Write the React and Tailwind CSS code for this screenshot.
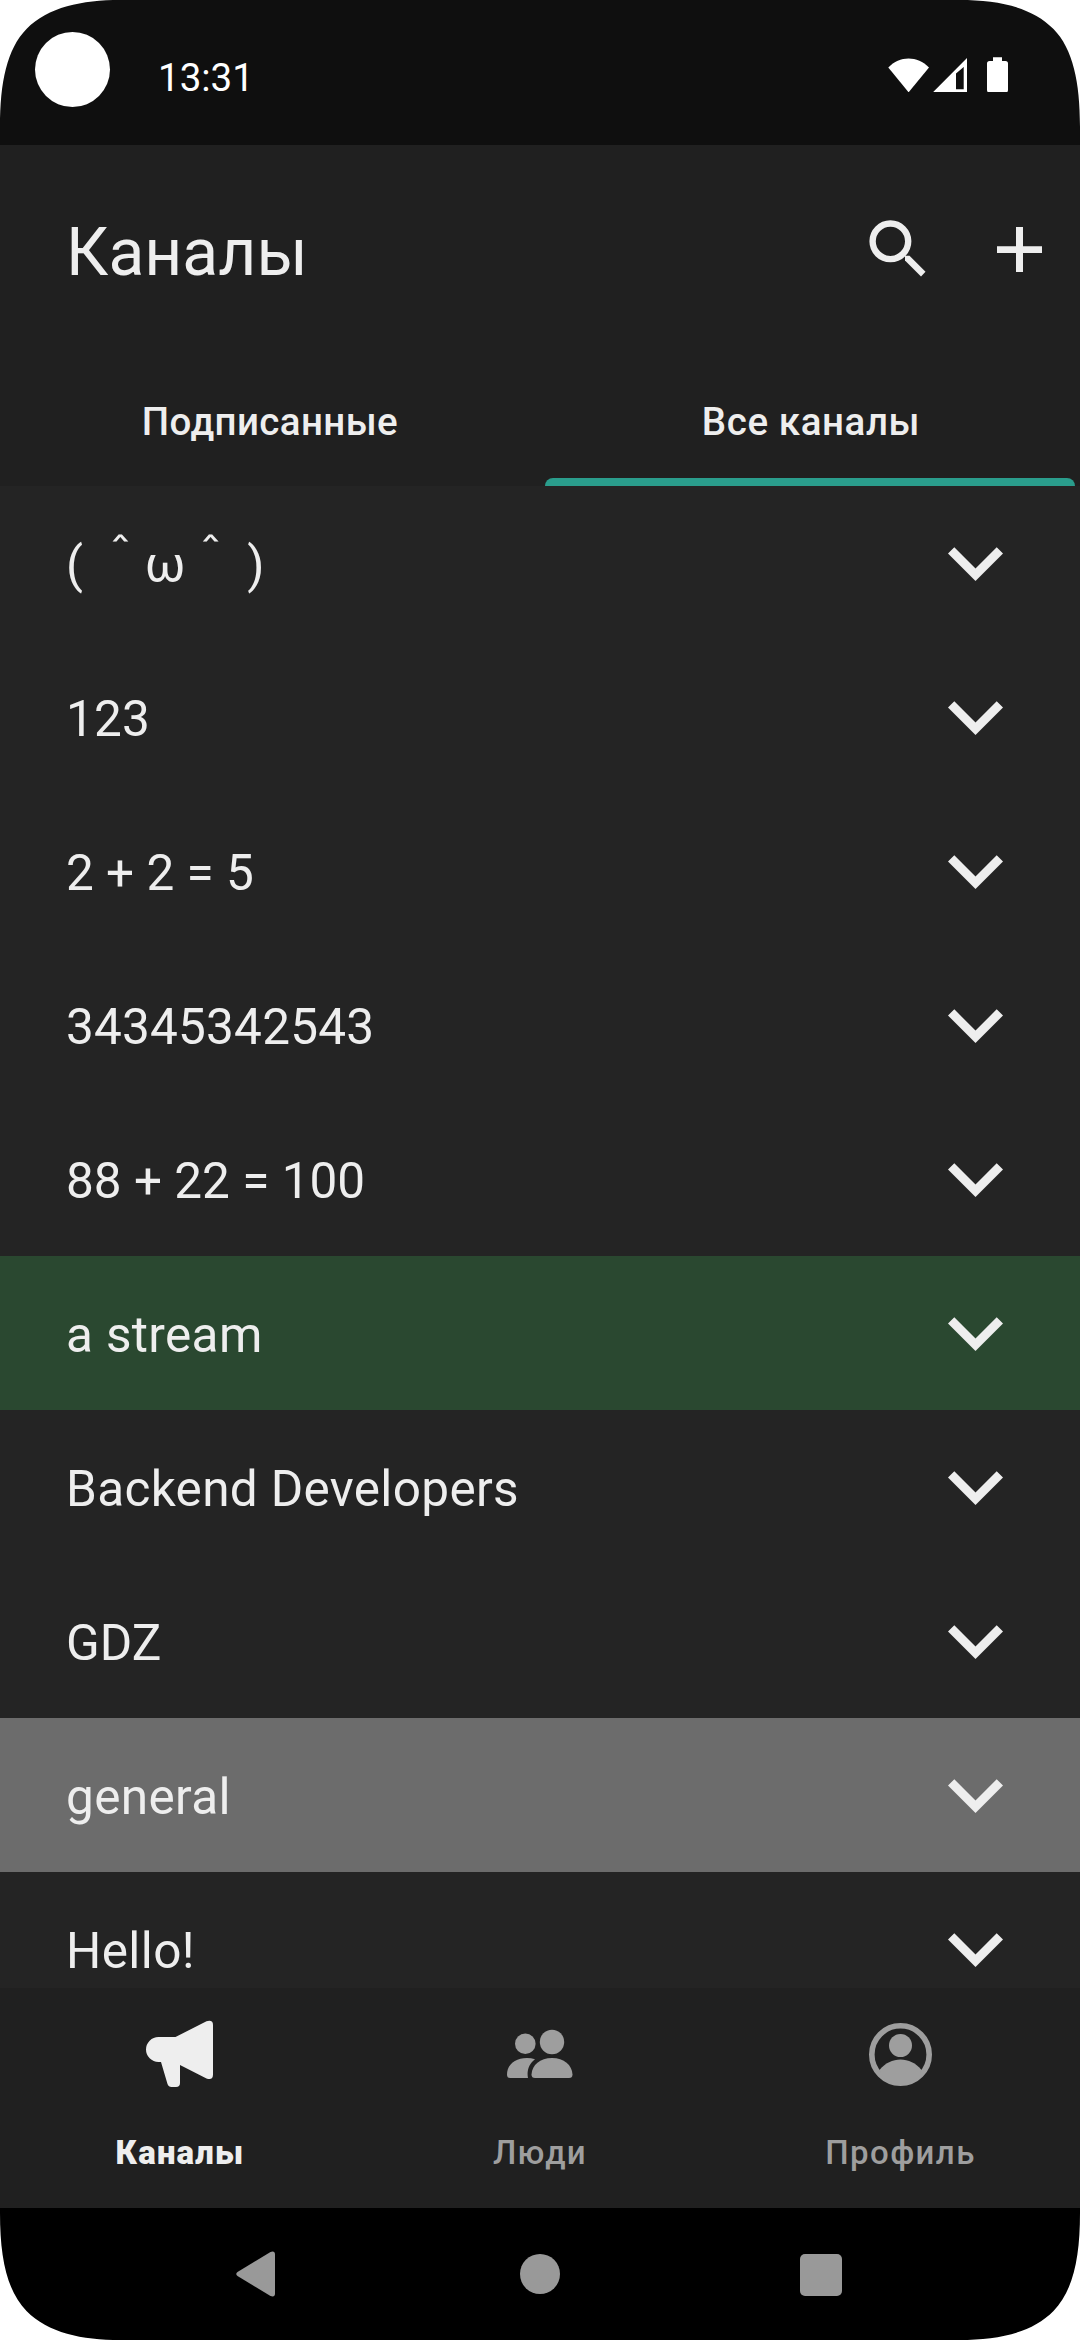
const FONT = 'font-[Roboto,"Noto_Sans","Noto_Sans_CJK_JP",sans-serif]';

const channels = [
  { name: "( ＾ω＾ )" },
  { name: "123", spacing: "tracking-[0.2px]" },
  { name: "2 + 2 = 5" },
  { name: "34345342543", spacing: "tracking-[0.2px]" },
  { name: "88 + 22 = 100" },
  { name: "a stream", tone: "bg-[#2a4830]", spacing: "tracking-[0.35px]" },
  { name: "Backend Developers", spacing: "tracking-[0.33px]" },
  { name: "GDZ" },
  { name: "general", tone: "bg-[#6c6c6c]", spacing: "tracking-[0.35px]" },
  { name: "Hello!", spacing: "tracking-[0.4px]" },
];

function Corner({ className }) {
  return (
    <svg className={"absolute h-32 w-32 " + className} viewBox="0 0 128 128" fill="#fff">
      <path d="M0 0H120C82 0 48 7 26.500 29C7 49 0 82 0 127Z" />
    </svg>
  );
}

function StatusBar() {
  return (
    <header className="flex h-[145px] shrink-0 items-start bg-[#0f0f0f] text-white">
      <div className="mt-8 ml-[35px] size-[75px] rounded-full bg-white" />
      <span className="mt-[55px] ml-[48px] text-[38.5px] leading-[46px]">13:31</span>
      <svg className="mt-[56px] ml-auto mr-[71px] h-9 w-[122px]" viewBox="887 56 122 36" fill="#fff">
        <path d="M888.300 67.500C899.500 55.500 917.500 55.500 929 67.500L908.600 92.300Z" />
        <path fillRule="evenodd" d="M932.500 92.700L967 58V92.700ZM956 73.500V89.300H963.700V67Z" />
        <path d="M993 57.300H1002V61H1005.500Q1008 61 1008 63.500V90Q1008 92.500 1005.500 92.500H989.500Q987 92.500 987 90V63.500Q987 61 989.500 61H993Z" />
      </svg>
    </header>
  );
}

function TitleBar() {
  return (
    <div className="flex h-[215px] shrink-0 items-start">
      <h1 className="mt-[69px] ml-[66px] text-[66px] leading-[78px]">Каналы</h1>
      <svg className="mt-[74px] ml-auto h-[60px] w-[60px]" viewBox="868 219 60 60" fill="none" stroke="#eeeeee">
        <circle cx="890.400" cy="241.300" r="17.800" strokeWidth="6.400" />
        <path d="M905 255.700H909.500L925.500 271.800L921 276.500L905 260.500Z" fill="#eeeeee" stroke="none" />
      </svg>
      <svg className="mt-[82px] mr-[38px] ml-[69px] h-[46px] w-[45px]" viewBox="0 0 45 46" fill="#eeeeee">
        <path d="M19 0H26V19.300H45V26H26V45H19V26H0V19.300H19Z" />
      </svg>
    </div>
  );
}

function Tabs() {
  return (
    <div className="grid h-[126px] shrink-0 grid-cols-2 text-center text-[38.5px] leading-[46px] font-medium tracking-[0.4px]">
      <div className="pt-[39px]">Подписанные</div>
      <div className="flex flex-col justify-between px-[5px] pt-[39px]">
        <span className="pl-0.5 tracking-[0.6px]">Все каналы</span>
        <div className="h-2 rounded-t-lg bg-[#2a9d8c]" />
      </div>
    </div>
  );
}

function Channel({ name, tone = "", spacing = "" }) {
  return (
    <li className={"flex h-[154px] shrink-0 items-start justify-between pr-[77px] pl-[66px] " + tone}>
      <span className={"mt-[50px] text-[49.5px] leading-[58px] whitespace-pre " + spacing}>{name}</span>
      <svg className="mt-[61px] h-[35px] w-[55px]" viewBox="0 0 55 35" fill="#eeeeee">
        <path d="M6.300 0.300L27.500 21.600L48.700 0.300L55 6.500L27.500 34L0 6.500Z" />
      </svg>
    </li>
  );
}

function MegaphoneIcon() {
  return (
    <svg className="h-[68px] w-[68px]" viewBox="146 2020 68 68" fill="#eeeeee">
      <path d="M158.500 2037H175.500L206.500 2021.300Q213 2019.500 213 2025V2074.500Q213 2080.500 206.500 2078.500L180 2065V2083Q180 2087 176 2087H171.500Q168.500 2087 167.500 2084L161 2062H158.500A12.500 12.500 0 0 1 158.500 2037Z" />
    </svg>
  );
}

function PeopleIcon() {
  return (
    <svg className="h-[68px] w-[68px]" viewBox="506 2020 68 68" fill="#9e9e9e">
      <circle cx="525.300" cy="2043.700" r="10.300" />
      <circle cx="552" cy="2042" r="12.200" />
      <path d="M507 2074.500C507 2065 515 2058 527 2058Q531 2058 535 2059.200C529 2063.500 526.500 2071 528 2078H510Q507 2078 507 2074.500Z" />
      <path d="M531.500 2074.500C532 2065 540 2058 552 2058S572 2065 572.500 2074.500Q572.500 2078 569 2078H535Q531.500 2078 531.500 2074.500Z" />
    </svg>
  );
}

function ProfileIcon() {
  return (
    <svg className="h-[68px] w-[68px]" viewBox="866 2020 68 68" fill="#9e9e9e">
      <circle cx="900.500" cy="2054.500" r="28.700" fill="none" stroke="#9e9e9e" strokeWidth="5.600" />
      <circle cx="900.500" cy="2045.500" r="11.500" />
      <path d="M879.500 2070C890.500 2056 910.500 2056 921.500 2070C915 2089 886 2089 879.500 2070Z" />
    </svg>
  );
}

function BottomNav() {
  return (
    <nav className="grid h-[220px] shrink-0 grid-cols-3 bg-[#202020] pt-8 text-[33px] leading-[40px]">
      <div className="flex flex-col items-center gap-[45px] font-black">
        <MegaphoneIcon />
        <span className="tracking-[1.2px]">Каналы</span>
      </div>
      <div className="flex flex-col items-center gap-[45px] font-medium text-[#9e9e9e]">
        <PeopleIcon />
        <span className="tracking-[1.2px]">Люди</span>
      </div>
      <div className="flex flex-col items-center gap-[45px] font-medium text-[#9e9e9e]">
        <ProfileIcon />
        <span className="pl-px tracking-[1.4px]">Профиль</span>
      </div>
    </nav>
  );
}

function SystemBar() {
  return (
    <footer className="flex h-[132px] shrink-0 items-center justify-between bg-black pr-[238px] pl-[236px]">
      <svg className="h-[46px] w-11" viewBox="0 0 44 46" fill="#999999">
        <path d="M1.500 21L34.500 1Q39 -.5 39 3.500V42.500Q39 46.500 34.500 45L1.500 25Q-1 23 1.500 21Z" />
      </svg>
      <div className="size-10 rounded-full bg-[#999999]" />
      <div className="mt-0.5 h-[42px] w-[42px] rounded-[5px] bg-[#999999]" />
    </footer>
  );
}

export default function App() {
  return (
    <div className={"relative flex h-[2340px] w-[1080px] flex-col overflow-hidden bg-[#202020] text-[#eeeeee] " + FONT}>
      <StatusBar />
      <TitleBar />
      <Tabs />
      <ul className="flex h-[1502px] shrink-0 flex-col overflow-hidden bg-[#242424]">
        {channels.map((c) => (
          <Channel key={c.name} {...c} />
        ))}
      </ul>
      <BottomNav />
      <SystemBar />
      <Corner className="top-0 left-0" />
      <Corner className="top-0 right-0 -scale-x-100" />
      <Corner className="bottom-0 left-0 -scale-y-100" />
      <Corner className="right-0 bottom-0 rotate-180" />
    </div>
  );
}
